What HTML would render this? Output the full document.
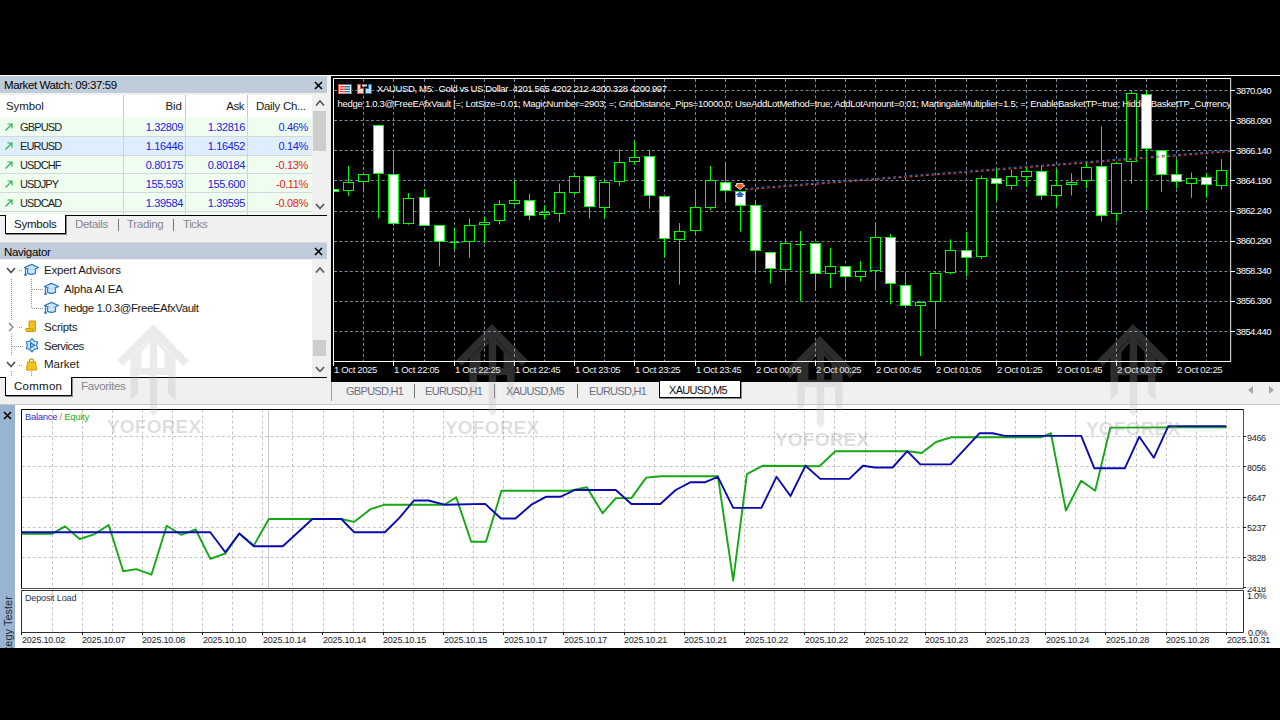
<!DOCTYPE html><html><head><meta charset="utf-8"><style>html,body{margin:0;padding:0;}body{width:1280px;height:720px;position:relative;overflow:hidden;background:#000;font-family:"Liberation Sans", sans-serif;}</style></head><body><div style="position:absolute;left:0px;top:75px;width:1280px;height:1px;background:#ffffff"></div>
<div style="position:absolute;left:0px;top:76px;width:331px;height:329px;background:#f0f0f0"></div>
<div style="position:absolute;left:0px;top:76px;width:327px;height:17px;background:#bfcddb"></div>
<div style="position:absolute;left:4px;top:77.00px;line-height:16px;font-size:11.5px;color:#000;letter-spacing:-0.4px;white-space:pre;">Market Watch: 09:37:59</div>
<svg style="position:absolute;left:313.5px;top:81.0px" width="9" height="9"><path d="M1 1L8 8M8 1L1 8" stroke="#000" stroke-width="1.6"/></svg>
<div style="position:absolute;left:0px;top:95px;width:312px;height:117px;background:#ffffff"></div>
<div style="position:absolute;left:6px;top:98.00px;line-height:16px;font-size:11.5px;color:#1a1a1a;letter-spacing:-0.1px;white-space:pre;">Symbol</div>
<div style="position:absolute;left:-118px;top:98.00px;width:300px;text-align:right;line-height:16px;font-size:11.5px;color:#1a1a1a;letter-spacing:0px;white-space:pre;">Bid</div>
<div style="position:absolute;left:-56px;top:98.00px;width:300px;text-align:right;line-height:16px;font-size:11.5px;color:#1a1a1a;letter-spacing:-0.45px;white-space:pre;">Ask</div>
<div style="position:absolute;left:256px;top:98.00px;line-height:16px;font-size:11.5px;color:#1a1a1a;letter-spacing:-0.3px;white-space:pre;">Daily Ch...</div>
<div style="position:absolute;left:123px;top:95px;width:1px;height:22px;background:#c8c8c8"></div>
<div style="position:absolute;left:185px;top:95px;width:1px;height:22px;background:#c8c8c8"></div>
<div style="position:absolute;left:247px;top:95px;width:1px;height:22px;background:#c8c8c8"></div>
<div style="position:absolute;left:0px;top:117px;width:312px;height:98px;background:#effdf0"></div>
<div style="position:absolute;left:0px;top:136px;width:312px;height:1px;background:#d4d8dc"></div>
<div style="position:absolute;left:0px;top:155px;width:312px;height:1px;background:#d4d8dc"></div>
<div style="position:absolute;left:0px;top:173px;width:312px;height:1px;background:#d4d8dc"></div>
<div style="position:absolute;left:0px;top:192px;width:312px;height:1px;background:#d4d8dc"></div>
<div style="position:absolute;left:0px;top:211px;width:312px;height:1px;background:#d4d8dc"></div>
<div style="position:absolute;left:123px;top:117px;width:1px;height:98px;background:#d4d4d4"></div>
<div style="position:absolute;left:185px;top:117px;width:1px;height:98px;background:#d4d4d4"></div>
<div style="position:absolute;left:247px;top:117px;width:1px;height:98px;background:#d4d4d4"></div>
<svg style="position:absolute;left:4px;top:121.7px" width="10" height="10"><path d="M1.5 8.5L8 2M3.5 2H8V6.5" stroke="#2fb04a" stroke-width="1.2" fill="none"/></svg>
<div style="position:absolute;left:20px;top:118.70px;line-height:16px;font-size:11px;color:#1a1a1a;letter-spacing:-0.85px;white-space:pre;">GBPUSD</div>
<div style="position:absolute;left:-117px;top:118.70px;width:300px;text-align:right;line-height:16px;font-size:11px;color:#2020e0;letter-spacing:-0.35px;white-space:pre;">1.32809</div>
<div style="position:absolute;left:-55px;top:118.70px;width:300px;text-align:right;line-height:16px;font-size:11px;color:#2020e0;letter-spacing:-0.35px;white-space:pre;">1.32816</div>
<div style="position:absolute;left:8px;top:118.70px;width:300px;text-align:right;line-height:16px;font-size:11px;color:#2222dd;letter-spacing:-0.35px;white-space:pre;">0.46%</div>
<div style="position:absolute;left:0px;top:137px;width:312px;height:18px;background:#dfeefc"></div>
<div style="position:absolute;left:123px;top:137px;width:1px;height:18px;background:#d4d4d4"></div>
<div style="position:absolute;left:185px;top:137px;width:1px;height:18px;background:#d4d4d4"></div>
<div style="position:absolute;left:247px;top:137px;width:1px;height:18px;background:#d4d4d4"></div>
<svg style="position:absolute;left:4px;top:140.7px" width="10" height="10"><path d="M1.5 8.5L8 2M3.5 2H8V6.5" stroke="#2fb04a" stroke-width="1.2" fill="none"/></svg>
<div style="position:absolute;left:20px;top:137.65px;line-height:16px;font-size:11px;color:#1a1a1a;letter-spacing:-0.85px;white-space:pre;">EURUSD</div>
<div style="position:absolute;left:-117px;top:137.65px;width:300px;text-align:right;line-height:16px;font-size:11px;color:#2020e0;letter-spacing:-0.35px;white-space:pre;">1.16446</div>
<div style="position:absolute;left:-55px;top:137.65px;width:300px;text-align:right;line-height:16px;font-size:11px;color:#2020e0;letter-spacing:-0.35px;white-space:pre;">1.16452</div>
<div style="position:absolute;left:8px;top:137.65px;width:300px;text-align:right;line-height:16px;font-size:11px;color:#2222dd;letter-spacing:-0.35px;white-space:pre;">0.14%</div>
<svg style="position:absolute;left:4px;top:159.6px" width="10" height="10"><path d="M1.5 8.5L8 2M3.5 2H8V6.5" stroke="#2fb04a" stroke-width="1.2" fill="none"/></svg>
<div style="position:absolute;left:20px;top:156.60px;line-height:16px;font-size:11px;color:#1a1a1a;letter-spacing:-0.85px;white-space:pre;">USDCHF</div>
<div style="position:absolute;left:-117px;top:156.60px;width:300px;text-align:right;line-height:16px;font-size:11px;color:#2020e0;letter-spacing:-0.35px;white-space:pre;">0.80175</div>
<div style="position:absolute;left:-55px;top:156.60px;width:300px;text-align:right;line-height:16px;font-size:11px;color:#2020e0;letter-spacing:-0.35px;white-space:pre;">0.80184</div>
<div style="position:absolute;left:8px;top:156.60px;width:300px;text-align:right;line-height:16px;font-size:11px;color:#e81818;letter-spacing:-0.35px;white-space:pre;">-0.13%</div>
<svg style="position:absolute;left:4px;top:178.6px" width="10" height="10"><path d="M1.5 8.5L8 2M3.5 2H8V6.5" stroke="#2fb04a" stroke-width="1.2" fill="none"/></svg>
<div style="position:absolute;left:20px;top:175.55px;line-height:16px;font-size:11px;color:#1a1a1a;letter-spacing:-0.85px;white-space:pre;">USDJPY</div>
<div style="position:absolute;left:-117px;top:175.55px;width:300px;text-align:right;line-height:16px;font-size:11px;color:#2020e0;letter-spacing:-0.35px;white-space:pre;">155.593</div>
<div style="position:absolute;left:-55px;top:175.55px;width:300px;text-align:right;line-height:16px;font-size:11px;color:#2020e0;letter-spacing:-0.35px;white-space:pre;">155.600</div>
<div style="position:absolute;left:8px;top:175.55px;width:300px;text-align:right;line-height:16px;font-size:11px;color:#e81818;letter-spacing:-0.35px;white-space:pre;">-0.11%</div>
<svg style="position:absolute;left:4px;top:197.5px" width="10" height="10"><path d="M1.5 8.5L8 2M3.5 2H8V6.5" stroke="#2fb04a" stroke-width="1.2" fill="none"/></svg>
<div style="position:absolute;left:20px;top:194.50px;line-height:16px;font-size:11px;color:#1a1a1a;letter-spacing:-0.85px;white-space:pre;">USDCAD</div>
<div style="position:absolute;left:-117px;top:194.50px;width:300px;text-align:right;line-height:16px;font-size:11px;color:#2020e0;letter-spacing:-0.35px;white-space:pre;">1.39584</div>
<div style="position:absolute;left:-55px;top:194.50px;width:300px;text-align:right;line-height:16px;font-size:11px;color:#2020e0;letter-spacing:-0.35px;white-space:pre;">1.39595</div>
<div style="position:absolute;left:8px;top:194.50px;width:300px;text-align:right;line-height:16px;font-size:11px;color:#e81818;letter-spacing:-0.35px;white-space:pre;">-0.08%</div>
<div style="position:absolute;left:312px;top:95px;width:15px;height:117px;background:#f0f0f0"></div>
<div style="position:absolute;left:313px;top:111px;width:13px;height:40px;background:#cdcdcd"></div>
<svg style="position:absolute;left:314.5px;top:100.25px" width="10" height="6.5"><path d="M1 5.5L5.0 1L9 5.5" stroke="#5a5a5a" stroke-width="1.8" fill="none"/></svg>
<svg style="position:absolute;left:314.5px;top:203.25px" width="10" height="6.5"><path d="M1 1L5.0 5.5L9 1" stroke="#5a5a5a" stroke-width="1.8" fill="none"/></svg>
<div style="position:absolute;left:0px;top:215px;width:327px;height:1px;background:#000"></div>
<div style="position:absolute;left:5px;top:215px;width:61px;height:19px;background:#fff;border:1px solid #000;border-top:none;box-sizing:border-box;box-shadow:1px 1px 0 #888"></div>
<div style="position:absolute;left:14px;top:216.00px;line-height:16px;font-size:11.5px;color:#111;letter-spacing:-0.22px;white-space:pre;">Symbols</div>
<div style="position:absolute;left:75px;top:216.00px;line-height:16px;font-size:11.5px;color:#85858f;letter-spacing:-0.3px;white-space:pre;">Details</div>
<div style="position:absolute;left:118px;top:219px;width:1px;height:12px;background:#777"></div>
<div style="position:absolute;left:127px;top:216.00px;line-height:16px;font-size:11.5px;color:#85858f;letter-spacing:-0.3px;white-space:pre;">Trading</div>
<div style="position:absolute;left:173px;top:219px;width:1px;height:12px;background:#777"></div>
<div style="position:absolute;left:183px;top:216.00px;line-height:16px;font-size:11.5px;color:#85858f;letter-spacing:-0.42px;white-space:pre;">Ticks</div>
<div style="position:absolute;left:0px;top:242px;width:327px;height:1px;background:#d8d8d8"></div>
<div style="position:absolute;left:0px;top:243px;width:327px;height:16px;background:#bfcddb"></div>
<div style="position:absolute;left:4px;top:243.50px;line-height:16px;font-size:11.5px;color:#000;letter-spacing:-0.29px;white-space:pre;">Navigator</div>
<svg style="position:absolute;left:313.5px;top:247.0px" width="9" height="9"><path d="M1 1L8 8M8 1L1 8" stroke="#000" stroke-width="1.6"/></svg>
<div style="position:absolute;left:0px;top:260px;width:312px;height:117px;background:#fff"></div>
<div style="position:absolute;left:312px;top:260px;width:15px;height:117px;background:#f0f0f0"></div>
<div style="position:absolute;left:313px;top:340px;width:13px;height:16px;background:#cdcdcd"></div>
<svg style="position:absolute;left:314.5px;top:266.75px" width="10" height="6.5"><path d="M1 5.5L5.0 1L9 5.5" stroke="#606060" stroke-width="1.8" fill="none"/></svg>
<svg style="position:absolute;left:314.5px;top:365.75px" width="10" height="6.5"><path d="M1 1L5.0 5.5L9 1" stroke="#606060" stroke-width="1.8" fill="none"/></svg>
<svg style="position:absolute;left:5.5px;top:267.25px" width="10" height="6.5"><path d="M1 1L5.0 5.5L9 1" stroke="#555" stroke-width="1.8" fill="none"/></svg>
<svg style="position:absolute;left:8px;top:322px" width="7" height="10"><path d="M1 1L5 5L1 9" stroke="#888" stroke-width="1.4" fill="none"/></svg>
<svg style="position:absolute;left:5.5px;top:361.25px" width="10" height="6.5"><path d="M1 1L5.0 5.5L9 1" stroke="#555" stroke-width="1.8" fill="none"/></svg>
<div style="position:absolute;left:19px;top:270px;width:3px;height:1px;background:repeating-linear-gradient(90deg,#999 0 1px, transparent 1px 2px)"></div>
<div style="position:absolute;left:19px;top:327px;width:3px;height:1px;background:repeating-linear-gradient(90deg,#999 0 1px, transparent 1px 2px)"></div>
<div style="position:absolute;left:19px;top:365px;width:3px;height:1px;background:repeating-linear-gradient(90deg,#999 0 1px, transparent 1px 2px)"></div>
<div style="position:absolute;left:11px;top:279px;width:1px;height:41px;background:repeating-linear-gradient(#999 0 1px, transparent 1px 2px)"></div>
<div style="position:absolute;left:11px;top:334px;width:1px;height:22px;background:repeating-linear-gradient(#999 0 1px, transparent 1px 2px)"></div>
<div style="position:absolute;left:11px;top:371px;width:1px;height:6px;background:repeating-linear-gradient(#999 0 1px, transparent 1px 2px)"></div>
<div style="position:absolute;left:12px;top:346px;width:12px;height:1px;background:repeating-linear-gradient(90deg,#999 0 1px, transparent 1px 2px)"></div>
<div style="position:absolute;left:31px;top:279px;width:1px;height:29px;background:repeating-linear-gradient(#999 0 1px, transparent 1px 2px)"></div>
<div style="position:absolute;left:32px;top:289px;width:11px;height:1px;background:repeating-linear-gradient(90deg,#999 0 1px, transparent 1px 2px)"></div>
<div style="position:absolute;left:32px;top:308px;width:11px;height:1px;background:repeating-linear-gradient(90deg,#999 0 1px, transparent 1px 2px)"></div>
<div style="position:absolute;left:31px;top:371px;width:1px;height:6px;background:repeating-linear-gradient(#999 0 1px, transparent 1px 2px)"></div>
<svg style="position:absolute;left:24px;top:263px" width="15" height="14"><path d="M0.5 4.5L7.5 1.5L14.5 4.5L7.5 7.5Z" fill="#cfe3f6" stroke="#2a78c4" stroke-width="1.2"/><path d="M3.5 6.2V10.2Q7.5 12.5 11.5 10.2V6.2" fill="#cfe3f6" stroke="#2a78c4" stroke-width="1.2"/><path d="M1.5 5V11" stroke="#2a78c4" stroke-width="1.2"/><circle cx="1.5" cy="11.8" r="1.3" fill="#2a78c4"/></svg>
<div style="position:absolute;left:44px;top:262.20px;line-height:16px;font-size:11.5px;color:#1a1a1a;letter-spacing:-0.21px;white-space:pre;">Expert Advisors</div>
<svg style="position:absolute;left:44px;top:282px" width="15" height="14"><path d="M0.5 4.5L7.5 1.5L14.5 4.5L7.5 7.5Z" fill="#cfe3f6" stroke="#2a78c4" stroke-width="1.2"/><path d="M3.5 6.2V10.2Q7.5 12.5 11.5 10.2V6.2" fill="#cfe3f6" stroke="#2a78c4" stroke-width="1.2"/><path d="M1.5 5V11" stroke="#2a78c4" stroke-width="1.2"/><circle cx="1.5" cy="11.8" r="1.3" fill="#2a78c4"/></svg>
<div style="position:absolute;left:64px;top:281.20px;line-height:16px;font-size:11.5px;color:#1a1a1a;letter-spacing:-0.24px;white-space:pre;">Alpha AI EA</div>
<svg style="position:absolute;left:44px;top:301px" width="15" height="14"><path d="M0.5 4.5L7.5 1.5L14.5 4.5L7.5 7.5Z" fill="#cfe3f6" stroke="#2a78c4" stroke-width="1.2"/><path d="M3.5 6.2V10.2Q7.5 12.5 11.5 10.2V6.2" fill="#cfe3f6" stroke="#2a78c4" stroke-width="1.2"/><path d="M1.5 5V11" stroke="#2a78c4" stroke-width="1.2"/><circle cx="1.5" cy="11.8" r="1.3" fill="#2a78c4"/></svg>
<div style="position:absolute;left:64px;top:300.20px;line-height:16px;font-size:11.5px;color:#1a1a1a;letter-spacing:-0.45px;white-space:pre;">hedge 1.0.3@FreeEAfxVault</div>
<svg style="position:absolute;left:25px;top:320px" width="12" height="13"><path d="M4 1H10.5V10.5Q10.5 11.5 9.5 11.5H1.5Q0.8 11.5 0.8 10.5V9.2Q0.8 8.5 1.5 8.5H4Z" fill="#f3c21a" stroke="#c8960a" stroke-width="1"/><path d="M1.5 8.5H8V11.5" fill="none" stroke="#c8960a" stroke-width="0.8"/></svg>
<div style="position:absolute;left:44px;top:318.80px;line-height:16px;font-size:11.5px;color:#1a1a1a;letter-spacing:-0.27px;white-space:pre;">Scripts</div>
<svg style="position:absolute;left:24.5px;top:338px" width="14" height="15"><path d="M7.00 0.70L4.70 3.32L1.28 4.00L2.40 7.30L1.28 10.60L4.70 11.28L7.00 13.90L9.30 11.28L12.72 10.60L11.60 7.30L12.72 4.00L9.30 3.32Z" fill="#cfe6fa" stroke="#2a78c4" stroke-width="1.1" stroke-linejoin="round"/><path d="M5.6 4.9V9.7L9.6 7.3Z" fill="none" stroke="#1f6fbf" stroke-width="1.2"/></svg>
<div style="position:absolute;left:44px;top:338.00px;line-height:16px;font-size:11.5px;color:#1a1a1a;letter-spacing:-0.54px;white-space:pre;">Services</div>
<svg style="position:absolute;left:26px;top:357px" width="12" height="14"><path d="M1.5 5H9.5L10.5 13H0.5Z" fill="#f5c518" stroke="#d09a00" stroke-width="1"/><path d="M3.5 5V3.2Q5.5 0.5 7.5 3.2V5" stroke="#c08a10" stroke-width="1.1" fill="none"/></svg>
<div style="position:absolute;left:44px;top:356.30px;line-height:16px;font-size:11.5px;color:#1a1a1a;letter-spacing:0px;white-space:pre;">Market</div>
<div style="position:absolute;left:0px;top:377px;width:327px;height:1px;background:#000"></div>
<div style="position:absolute;left:5px;top:377px;width:67px;height:19px;background:#fff;border:1px solid #000;border-top:none;box-sizing:border-box;box-shadow:1px 1px 0 #888"></div>
<div style="position:absolute;left:14px;top:378.00px;line-height:16px;font-size:11.5px;color:#111;letter-spacing:0.26px;white-space:pre;">Common</div>
<div style="position:absolute;left:81px;top:378.00px;line-height:16px;font-size:11.5px;color:#85858f;letter-spacing:-0.31px;white-space:pre;">Favorites</div>
<div style="position:absolute;left:330px;top:76px;width:950px;height:306px;background:#000"></div>
<div style="position:absolute;left:330px;top:76px;width:1px;height:306px;background:#e8e8e8"></div>
<svg style="position:absolute;left:0;top:0" width="1280" height="720"><defs><clipPath id="plot"><rect x="334" y="79" width="896" height="282"/></clipPath></defs><path d="M334 90.5H1230 M334 120.5H1230 M334 150.5H1230 M334 180.5H1230 M334 211.5H1230 M334 241.5H1230 M334 271.5H1230 M334 301.5H1230 M334 331.5H1230" stroke="#778899" stroke-width="1" stroke-dasharray="3 2.3" fill="none"/><path d="M363.5 79V361 M393.5 79V361 M424.5 79V361 M454.5 79V361 M484.5 79V361 M514.5 79V361 M544.5 79V361 M574.5 79V361 M604.5 79V361 M634.5 79V361 M664.5 79V361 M695.5 79V361 M725.5 79V361 M755.5 79V361 M785.5 79V361 M815.5 79V361 M845.5 79V361 M875.5 79V361 M905.5 79V361 M935.5 79V361 M966.5 79V361 M996.5 79V361 M1026.5 79V361 M1056.5 79V361 M1086.5 79V361 M1116.5 79V361 M1146.5 79V361 M1176.5 79V361 M1206.5 79V361" stroke="#778899" stroke-width="1" stroke-dasharray="3 2.5" fill="none"/><g clip-path="url(#plot)"><path d="M333.5 188.6V191.7" stroke="#00ff00" stroke-width="1"/><rect x="328.5" y="189.5" width="10" height="2.0" fill="#ffffff" stroke="#00ff00" stroke-width="1"/><path d="M348.5 165.8V195.8" stroke="#00ff00" stroke-width="1"/><rect x="343.5" y="182.5" width="10" height="8.0" fill="#000000" stroke="#00ff00" stroke-width="1"/><path d="M363.5 173.6V192.4" stroke="#00ff00" stroke-width="1"/><rect x="358.5" y="174.5" width="10" height="7.0" fill="#000000" stroke="#00ff00" stroke-width="1"/><path d="M378.5 124.7V218.4" stroke="#00ff00" stroke-width="1"/><rect x="373.5" y="125.5" width="10" height="48.0" fill="#ffffff" stroke="#00ff00" stroke-width="1"/><path d="M393.5 153.6V226.0" stroke="#00ff00" stroke-width="1"/><rect x="388.5" y="174.5" width="10" height="49.0" fill="#ffffff" stroke="#00ff00" stroke-width="1"/><path d="M408.5 193.1V224.7" stroke="#00ff00" stroke-width="1"/><rect x="403.5" y="198.5" width="10" height="25.0" fill="#000000" stroke="#00ff00" stroke-width="1"/><path d="M424.5 189.0V226.0" stroke="#00ff00" stroke-width="1"/><rect x="419.5" y="197.5" width="10" height="28.0" fill="#ffffff" stroke="#00ff00" stroke-width="1"/><path d="M439.5 225.0V266.4" stroke="#00ff00" stroke-width="1"/><rect x="434.5" y="225.5" width="10" height="16.0" fill="#ffffff" stroke="#00ff00" stroke-width="1"/><path d="M454.5 227.6V249.8" stroke="#00ff00" stroke-width="1"/><path d="M449.5 242.5H459.5" stroke="#00ff00" stroke-width="1"/><path d="M469.5 218.5V257.6" stroke="#00ff00" stroke-width="1"/><rect x="464.5" y="225.5" width="10" height="16.0" fill="#000000" stroke="#00ff00" stroke-width="1"/><path d="M484.5 216.6V243.1" stroke="#00ff00" stroke-width="1"/><rect x="479.5" y="222.5" width="10" height="2.0" fill="#000000" stroke="#00ff00" stroke-width="1"/><path d="M499.5 200.2V224.4" stroke="#00ff00" stroke-width="1"/><rect x="494.5" y="204.5" width="10" height="16.0" fill="#000000" stroke="#00ff00" stroke-width="1"/><path d="M514.5 180.7V205.1" stroke="#00ff00" stroke-width="1"/><rect x="509.5" y="200.5" width="10" height="3.0" fill="#000000" stroke="#00ff00" stroke-width="1"/><path d="M529.5 193.6V220.0" stroke="#00ff00" stroke-width="1"/><rect x="524.5" y="200.5" width="10" height="15.0" fill="#ffffff" stroke="#00ff00" stroke-width="1"/><path d="M544.5 205.1V219.5" stroke="#00ff00" stroke-width="1"/><rect x="539.5" y="212.5" width="10" height="2.0" fill="#000000" stroke="#00ff00" stroke-width="1"/><path d="M559.5 183.6V222.0" stroke="#00ff00" stroke-width="1"/><rect x="554.5" y="192.5" width="10" height="21.0" fill="#000000" stroke="#00ff00" stroke-width="1"/><path d="M574.5 175.1V194.7" stroke="#00ff00" stroke-width="1"/><rect x="569.5" y="176.5" width="10" height="16.0" fill="#000000" stroke="#00ff00" stroke-width="1"/><path d="M589.5 176.4V218.5" stroke="#00ff00" stroke-width="1"/><rect x="584.5" y="176.5" width="10" height="30.0" fill="#ffffff" stroke="#00ff00" stroke-width="1"/><path d="M604.5 180.7V218.2" stroke="#00ff00" stroke-width="1"/><rect x="599.5" y="182.5" width="10" height="25.0" fill="#000000" stroke="#00ff00" stroke-width="1"/><path d="M619.5 149.1V185.8" stroke="#00ff00" stroke-width="1"/><rect x="614.5" y="162.5" width="10" height="19.0" fill="#000000" stroke="#00ff00" stroke-width="1"/><path d="M634.5 141.3V164.7" stroke="#00ff00" stroke-width="1"/><rect x="629.5" y="157.5" width="10" height="4.0" fill="#000000" stroke="#00ff00" stroke-width="1"/><path d="M649.5 149.6V208.7" stroke="#00ff00" stroke-width="1"/><rect x="644.5" y="156.5" width="10" height="39.0" fill="#ffffff" stroke="#00ff00" stroke-width="1"/><path d="M664.5 196.4V257.1" stroke="#00ff00" stroke-width="1"/><rect x="659.5" y="196.5" width="10" height="42.0" fill="#ffffff" stroke="#00ff00" stroke-width="1"/><path d="M679.5 223.1V284.7" stroke="#00ff00" stroke-width="1"/><rect x="674.5" y="231.5" width="10" height="8.0" fill="#000000" stroke="#00ff00" stroke-width="1"/><path d="M695.5 189.1V234.9" stroke="#00ff00" stroke-width="1"/><rect x="690.5" y="207.5" width="10" height="23.0" fill="#000000" stroke="#00ff00" stroke-width="1"/><path d="M710.5 165.8V210.0" stroke="#00ff00" stroke-width="1"/><rect x="705.5" y="180.5" width="10" height="27.0" fill="#000000" stroke="#00ff00" stroke-width="1"/><path d="M725.5 163.1V201.3" stroke="#00ff00" stroke-width="1"/><rect x="720.5" y="182.5" width="10" height="8.0" fill="#ffffff" stroke="#00ff00" stroke-width="1"/><path d="M740.5 190.9V231.5" stroke="#00ff00" stroke-width="1"/><rect x="735.5" y="191.5" width="10" height="14.0" fill="#ffffff" stroke="#00ff00" stroke-width="1"/><path d="M755.5 199.8V272.7" stroke="#00ff00" stroke-width="1"/><rect x="750.5" y="205.5" width="10" height="45.0" fill="#ffffff" stroke="#00ff00" stroke-width="1"/><path d="M770.5 252.0V283.5" stroke="#00ff00" stroke-width="1"/><rect x="765.5" y="252.5" width="10" height="16.0" fill="#ffffff" stroke="#00ff00" stroke-width="1"/><path d="M785.5 238.4V282.2" stroke="#00ff00" stroke-width="1"/><rect x="780.5" y="243.5" width="10" height="26.0" fill="#000000" stroke="#00ff00" stroke-width="1"/><path d="M800.5 231.1V301.1" stroke="#00ff00" stroke-width="1"/><path d="M795.5 244.5H805.5" stroke="#00ff00" stroke-width="1"/><path d="M815.5 243.3V290.0" stroke="#00ff00" stroke-width="1"/><rect x="810.5" y="243.5" width="10" height="30.0" fill="#ffffff" stroke="#00ff00" stroke-width="1"/><path d="M830.5 247.8V288.2" stroke="#00ff00" stroke-width="1"/><rect x="825.5" y="266.5" width="10" height="7.0" fill="#000000" stroke="#00ff00" stroke-width="1"/><path d="M845.5 266.0V291.1" stroke="#00ff00" stroke-width="1"/><rect x="840.5" y="266.5" width="10" height="10.0" fill="#ffffff" stroke="#00ff00" stroke-width="1"/><path d="M860.5 261.1V281.6" stroke="#00ff00" stroke-width="1"/><rect x="855.5" y="271.5" width="10" height="5.0" fill="#000000" stroke="#00ff00" stroke-width="1"/><path d="M875.5 224.4V289.6" stroke="#00ff00" stroke-width="1"/><rect x="870.5" y="237.5" width="10" height="33.0" fill="#000000" stroke="#00ff00" stroke-width="1"/><path d="M890.5 234.0V304.4" stroke="#00ff00" stroke-width="1"/><rect x="885.5" y="237.5" width="10" height="46.0" fill="#ffffff" stroke="#00ff00" stroke-width="1"/><path d="M905.5 273.1V307.8" stroke="#00ff00" stroke-width="1"/><rect x="900.5" y="285.5" width="10" height="20.0" fill="#ffffff" stroke="#00ff00" stroke-width="1"/><path d="M920.5 301.1V356.1" stroke="#00ff00" stroke-width="1"/><rect x="915.5" y="302.5" width="10" height="3.0" fill="#000000" stroke="#00ff00" stroke-width="1"/><path d="M935.5 271.1V328.3" stroke="#00ff00" stroke-width="1"/><rect x="930.5" y="273.5" width="10" height="28.0" fill="#000000" stroke="#00ff00" stroke-width="1"/><path d="M950.5 239.3V274.4" stroke="#00ff00" stroke-width="1"/><rect x="945.5" y="250.5" width="10" height="22.0" fill="#000000" stroke="#00ff00" stroke-width="1"/><path d="M966.5 231.8V276.2" stroke="#00ff00" stroke-width="1"/><rect x="961.5" y="250.5" width="10" height="7.0" fill="#ffffff" stroke="#00ff00" stroke-width="1"/><path d="M981.5 175.6V258.9" stroke="#00ff00" stroke-width="1"/><rect x="976.5" y="178.5" width="10" height="78.0" fill="#000000" stroke="#00ff00" stroke-width="1"/><path d="M996.5 168.9V200.7" stroke="#00ff00" stroke-width="1"/><rect x="991.5" y="178.5" width="10" height="5.0" fill="#ffffff" stroke="#00ff00" stroke-width="1"/><path d="M1011.5 169.6V189.6" stroke="#00ff00" stroke-width="1"/><rect x="1006.5" y="176.5" width="10" height="9.0" fill="#000000" stroke="#00ff00" stroke-width="1"/><path d="M1026.5 166.7V187.3" stroke="#00ff00" stroke-width="1"/><rect x="1021.5" y="171.5" width="10" height="5.0" fill="#000000" stroke="#00ff00" stroke-width="1"/><path d="M1041.5 165.5V199.7" stroke="#00ff00" stroke-width="1"/><rect x="1036.5" y="171.5" width="10" height="24.0" fill="#ffffff" stroke="#00ff00" stroke-width="1"/><path d="M1056.5 169.0V207.0" stroke="#00ff00" stroke-width="1"/><rect x="1051.5" y="185.5" width="10" height="10.0" fill="#000000" stroke="#00ff00" stroke-width="1"/><path d="M1071.5 173.3V195.5" stroke="#00ff00" stroke-width="1"/><rect x="1066.5" y="182.5" width="10" height="2.0" fill="#000000" stroke="#00ff00" stroke-width="1"/><path d="M1086.5 163.0V188.0" stroke="#00ff00" stroke-width="1"/><rect x="1081.5" y="167.5" width="10" height="13.0" fill="#000000" stroke="#00ff00" stroke-width="1"/><path d="M1101.5 126.3V221.3" stroke="#00ff00" stroke-width="1"/><rect x="1096.5" y="166.5" width="10" height="49.0" fill="#ffffff" stroke="#00ff00" stroke-width="1"/><path d="M1116.5 162.2V221.3" stroke="#00ff00" stroke-width="1"/><rect x="1111.5" y="163.5" width="10" height="50.0" fill="#000000" stroke="#00ff00" stroke-width="1"/><path d="M1131.5 90.0V183.5" stroke="#00ff00" stroke-width="1"/><rect x="1126.5" y="93.5" width="10" height="68.0" fill="#000000" stroke="#00ff00" stroke-width="1"/><path d="M1146.5 90.0V210.0" stroke="#00ff00" stroke-width="1"/><rect x="1141.5" y="94.5" width="10" height="54.0" fill="#ffffff" stroke="#00ff00" stroke-width="1"/><path d="M1161.5 150.3V192.0" stroke="#00ff00" stroke-width="1"/><rect x="1156.5" y="150.5" width="10" height="24.0" fill="#ffffff" stroke="#00ff00" stroke-width="1"/><path d="M1176.5 159.2V188.3" stroke="#00ff00" stroke-width="1"/><rect x="1171.5" y="174.5" width="10" height="7.0" fill="#ffffff" stroke="#00ff00" stroke-width="1"/><path d="M1191.5 172.5V197.8" stroke="#00ff00" stroke-width="1"/><rect x="1186.5" y="178.5" width="10" height="5.0" fill="#000000" stroke="#00ff00" stroke-width="1"/><path d="M1206.5 173.0V197.5" stroke="#00ff00" stroke-width="1"/><rect x="1201.5" y="177.5" width="10" height="7.0" fill="#ffffff" stroke="#00ff00" stroke-width="1"/><path d="M1221.5 159.2V189.7" stroke="#00ff00" stroke-width="1"/><rect x="1216.5" y="170.5" width="10" height="15.0" fill="#000000" stroke="#00ff00" stroke-width="1"/><path d="M745 188.6L1230 150.4" stroke="#1e6ad0" stroke-width="1" stroke-dasharray="3 2.5" fill="none"/><path d="M745 189.8L1230 151.6" stroke="#e0502a" stroke-width="1" stroke-dasharray="3 2.5" fill="none"/><path d="M736.5 183.5H743V185.5H745L740 189.5L735 185.5H736.5Z" fill="#ee5522" stroke="#fff" stroke-width="0.8"/><path d="M740 191.5L744.5 195H742.5V197H737.5V195H735.5Z" fill="#1a66cc"/></g><path d="M1230.5 361.5H333.5V78.5H1230" stroke="#ffffff" stroke-width="1" fill="none"/><path d="M1230.6 78V362" stroke="#c8c8c8" stroke-width="1.2" fill="none"/><path d="M1231 90.5H1235 M1231 120.5H1235 M1231 150.5H1235 M1231 180.5H1235 M1231 211.5H1235 M1231 241.5H1235 M1231 271.5H1235 M1231 301.5H1235 M1231 331.5H1235 M333.5 362V366 M393.5 362V366 M454.5 362V366 M514.5 362V366 M574.5 362V366 M634.5 362V366 M695.5 362V366 M755.5 362V366 M815.5 362V366 M875.5 362V366 M935.5 362V366 M996.5 362V366 M1056.5 362V366 M1116.5 362V366 M1176.5 362V366" stroke="#ffffff" stroke-width="1"/></svg>
<svg style="position:absolute;left:338px;top:84px" width="14" height="10"><rect x="0" y="0" width="7" height="10" fill="#e0483c"/><rect x="7" y="0" width="7" height="10" fill="#1f6fbf"/><path d="M1.5 1.5H12.5M1.5 4H12.5M1.5 6.5H12.5M1.5 8.8H12.5" stroke="#fff" stroke-width="1"/><path d="M1.5 1V9.5M12.5 1V9.5" stroke="#fff" stroke-width="1"/></svg>
<svg style="position:absolute;left:357px;top:84px" width="15" height="10"><path d="M0 0H4V4H7V10H0Z" fill="#e0483c"/><path d="M1 1H3V5H6V9H1Z" fill="#f8d8d0"/><path d="M8 10V4H11V0H15V10Z" fill="#1f6fbf"/><path d="M9 9V5H12V1H14V9Z" fill="#b8dcf8"/><rect x="5" y="0.5" width="5" height="2" fill="#ddd"/></svg>
<div style="position:absolute;left:377px;top:81.00px;line-height:16px;font-size:9.5px;color:#ffffff;letter-spacing:-0.35px;white-space:pre;">XAUUSD, M5:  Gold vs US Dollar  4201.565 4202.212 4200.328 4200.997</div>
<div style="position:absolute;left:334px;top:79px;width:896px;height:40px;overflow:hidden">
<div style="position:absolute;left:3.5px;top:16.50px;line-height:16px;font-size:9.5px;color:#ffffff;letter-spacing:-0.28px;white-space:pre;">hedge 1.0.3@FreeEAfxVault [=; LotSize=0.01; MagicNumber=2903; =; GridDistance_Pips=10000.0; UseAddLotMethod=true; AddLotAmount=0.01; MartingaleMultiplier=1.5; =; EnableBasketTP=true; HiddenBasketTP_Currency=5.0</div>
</div>
<div style="position:absolute;left:1236px;top:82.50px;line-height:16px;font-size:9.5px;color:#ffffff;letter-spacing:-0.58px;white-space:pre;">3870.040</div>
<div style="position:absolute;left:1236px;top:112.62px;line-height:16px;font-size:9.5px;color:#ffffff;letter-spacing:-0.58px;white-space:pre;">3868.090</div>
<div style="position:absolute;left:1236px;top:142.75px;line-height:16px;font-size:9.5px;color:#ffffff;letter-spacing:-0.58px;white-space:pre;">3866.140</div>
<div style="position:absolute;left:1236px;top:172.88px;line-height:16px;font-size:9.5px;color:#ffffff;letter-spacing:-0.58px;white-space:pre;">3864.190</div>
<div style="position:absolute;left:1236px;top:203.00px;line-height:16px;font-size:9.5px;color:#ffffff;letter-spacing:-0.58px;white-space:pre;">3862.240</div>
<div style="position:absolute;left:1236px;top:233.12px;line-height:16px;font-size:9.5px;color:#ffffff;letter-spacing:-0.58px;white-space:pre;">3860.290</div>
<div style="position:absolute;left:1236px;top:263.25px;line-height:16px;font-size:9.5px;color:#ffffff;letter-spacing:-0.58px;white-space:pre;">3858.340</div>
<div style="position:absolute;left:1236px;top:293.38px;line-height:16px;font-size:9.5px;color:#ffffff;letter-spacing:-0.58px;white-space:pre;">3856.390</div>
<div style="position:absolute;left:1236px;top:323.50px;line-height:16px;font-size:9.5px;color:#ffffff;letter-spacing:-0.58px;white-space:pre;">3854.440</div>
<div style="position:absolute;left:334px;top:362.00px;line-height:16px;font-size:9.5px;color:#f0f0f0;letter-spacing:-0.35px;white-space:pre;">1 Oct 2025</div>
<div style="position:absolute;left:394px;top:362.00px;line-height:16px;font-size:9.5px;color:#f0f0f0;letter-spacing:-0.35px;white-space:pre;">1 Oct 22:05</div>
<div style="position:absolute;left:455px;top:362.00px;line-height:16px;font-size:9.5px;color:#f0f0f0;letter-spacing:-0.35px;white-space:pre;">1 Oct 22:25</div>
<div style="position:absolute;left:515px;top:362.00px;line-height:16px;font-size:9.5px;color:#f0f0f0;letter-spacing:-0.35px;white-space:pre;">1 Oct 22:45</div>
<div style="position:absolute;left:575px;top:362.00px;line-height:16px;font-size:9.5px;color:#f0f0f0;letter-spacing:-0.35px;white-space:pre;">1 Oct 23:05</div>
<div style="position:absolute;left:635px;top:362.00px;line-height:16px;font-size:9.5px;color:#f0f0f0;letter-spacing:-0.35px;white-space:pre;">1 Oct 23:25</div>
<div style="position:absolute;left:696px;top:362.00px;line-height:16px;font-size:9.5px;color:#f0f0f0;letter-spacing:-0.35px;white-space:pre;">1 Oct 23:45</div>
<div style="position:absolute;left:756px;top:362.00px;line-height:16px;font-size:9.5px;color:#f0f0f0;letter-spacing:-0.35px;white-space:pre;">2 Oct 00:05</div>
<div style="position:absolute;left:816px;top:362.00px;line-height:16px;font-size:9.5px;color:#f0f0f0;letter-spacing:-0.35px;white-space:pre;">2 Oct 00:25</div>
<div style="position:absolute;left:876px;top:362.00px;line-height:16px;font-size:9.5px;color:#f0f0f0;letter-spacing:-0.35px;white-space:pre;">2 Oct 00:45</div>
<div style="position:absolute;left:936px;top:362.00px;line-height:16px;font-size:9.5px;color:#f0f0f0;letter-spacing:-0.35px;white-space:pre;">2 Oct 01:05</div>
<div style="position:absolute;left:997px;top:362.00px;line-height:16px;font-size:9.5px;color:#f0f0f0;letter-spacing:-0.35px;white-space:pre;">2 Oct 01:25</div>
<div style="position:absolute;left:1057px;top:362.00px;line-height:16px;font-size:9.5px;color:#f0f0f0;letter-spacing:-0.35px;white-space:pre;">2 Oct 01:45</div>
<div style="position:absolute;left:1117px;top:362.00px;line-height:16px;font-size:9.5px;color:#f0f0f0;letter-spacing:-0.35px;white-space:pre;">2 Oct 02:05</div>
<div style="position:absolute;left:1177px;top:362.00px;line-height:16px;font-size:9.5px;color:#f0f0f0;letter-spacing:-0.35px;white-space:pre;">2 Oct 02:25</div>
<div style="position:absolute;left:331px;top:382px;width:949px;height:22px;background:#f0f0f0"></div>
<div style="position:absolute;left:331px;top:382px;width:1px;height:19px;background:#a0a0a0"></div>
<div style="position:absolute;left:346px;top:382.50px;line-height:16px;font-size:11px;color:#6e6e80;letter-spacing:-0.7px;white-space:pre;">GBPUSD,H1</div>
<div style="position:absolute;left:425px;top:382.50px;line-height:16px;font-size:11px;color:#6e6e80;letter-spacing:-0.7px;white-space:pre;">EURUSD,H1</div>
<div style="position:absolute;left:506px;top:382.50px;line-height:16px;font-size:11px;color:#6e6e80;letter-spacing:-0.7px;white-space:pre;">XAUUSD,M5</div>
<div style="position:absolute;left:589px;top:382.50px;line-height:16px;font-size:11px;color:#6e6e80;letter-spacing:-0.7px;white-space:pre;">EURUSD,H1</div>
<div style="position:absolute;left:414px;top:384px;width:1px;height:14px;background:#777"></div>
<div style="position:absolute;left:494px;top:384px;width:1px;height:14px;background:#777"></div>
<div style="position:absolute;left:577px;top:384px;width:1px;height:14px;background:#777"></div>
<div style="position:absolute;left:659px;top:381px;width:82px;height:17px;background:#fff;border:1px solid #000;border-top:none;box-sizing:border-box;box-shadow:1px 1px 0 #888"></div>
<div style="position:absolute;left:669px;top:381.50px;line-height:16px;font-size:11px;color:#111;letter-spacing:-0.7px;white-space:pre;">XAUUSD,M5</div>
<svg style="position:absolute;left:1247px;top:385px" width="8" height="10"><path d="M6 1V9L1 5Z" fill="#a8a8a8"/></svg>
<svg style="position:absolute;left:1267px;top:385px" width="8" height="10"><path d="M2 1V9L7 5Z" fill="#a8a8a8"/></svg>
<div style="position:absolute;left:0px;top:404px;width:1280px;height:1px;background:#c8c8c8"></div>
<div style="position:absolute;left:0px;top:405px;width:1280px;height:243px;background:#ffffff"></div>
<div style="position:absolute;left:0px;top:405px;width:15px;height:243px;background:#99b4d1"></div>
<svg style="position:absolute;left:3.0px;top:411.0px" width="9" height="9"><path d="M1 1L8 8M8 1L1 8" stroke="#000" stroke-width="1.6"/></svg>
<div style="position:absolute;left:0;top:405px;width:15px;height:243px;overflow:hidden"><div style="position:absolute;left:-32px;top:220.7px;width:80px;height:14px;line-height:14px;font-size:11px;color:#1c2a3a;white-space:pre;transform:rotate(-90deg);transform-origin:40px 7px;text-align:center">Strategy Tester</div></div>
<svg style="position:absolute;left:0;top:0" width="1280" height="720"><path d="M52.5 410V588M52.5 591V632 M82.5 410V588M82.5 591V632 M112.5 410V588M112.5 591V632 M142.5 410V588M142.5 591V632 M172.5 410V588M172.5 591V632 M202.5 410V588M202.5 591V632 M232.5 410V588M232.5 591V632 M262.5 410V588M262.5 591V632 M292.5 410V588M292.5 591V632 M323.5 410V588M323.5 591V632 M353.5 410V588M353.5 591V632 M383.5 410V588M383.5 591V632 M413.5 410V588M413.5 591V632 M443.5 410V588M443.5 591V632 M473.5 410V588M473.5 591V632 M503.5 410V588M503.5 591V632 M533.5 410V588M533.5 591V632 M563.5 410V588M563.5 591V632 M594.5 410V588M594.5 591V632 M624.5 410V588M624.5 591V632 M654.5 410V588M654.5 591V632 M684.5 410V588M684.5 591V632 M714.5 410V588M714.5 591V632 M744.5 410V588M744.5 591V632 M774.5 410V588M774.5 591V632 M804.5 410V588M804.5 591V632 M834.5 410V588M834.5 591V632 M865.5 410V588M865.5 591V632 M895.5 410V588M895.5 591V632 M925.5 410V588M925.5 591V632 M955.5 410V588M955.5 591V632 M985.5 410V588M985.5 591V632 M1015.5 410V588M1015.5 591V632 M1045.5 410V588M1045.5 591V632 M1075.5 410V588M1075.5 591V632 M1105.5 410V588M1105.5 591V632 M1136.5 410V588M1136.5 591V632 M1166.5 410V588M1166.5 591V632 M1196.5 410V588M1196.5 591V632 M1226.5 410V588M1226.5 591V632" stroke="#c4c4c4" stroke-width="1" stroke-dasharray="2.8 2.6" fill="none"/><path d="M22 436.5H1243 M22 466.5H1243 M22 497.5H1243 M22 527.5H1243 M22 557.5H1243" stroke="#c4c4c4" stroke-width="1" stroke-dasharray="2.8 2.6" fill="none"/><path d="M268.5 410V588" stroke="#c8c8c8" stroke-width="1"/><path d="M21.5 588.5V409.5H1243" stroke="#000" stroke-width="1" fill="none"/><path d="M1243.5 409V588.5H21" stroke="#505050" stroke-width="1" fill="none"/><path d="M21.5 590.5H1243.5V632.5H21.5Z" stroke="#303030" stroke-width="1" fill="none"/><path d="M1243 436.5H1246 M1243 466.5H1246 M1243 497.5H1246 M1243 527.5H1246 M1243 557.5H1246 M1243 587.5H1246 M21.5 632V635 M82.5 632V635 M142.5 632V635 M202.5 632V635 M262.5 632V635 M322.5 632V635 M383.5 632V635 M443.5 632V635 M503.5 632V635 M563.5 632V635 M624.5 632V635 M684.5 632V635 M744.5 632V635 M804.5 632V635 M864.5 632V635 M925.5 632V635 M985.5 632V635 M1045.5 632V635 M1105.5 632V635 M1166.5 632V635 M1226.5 632V635" stroke="#1a1a1a" stroke-width="1"/><polyline points="21.6,533.8 51.9,533.8 65.1,526.4 79.6,539 94.2,534.3 108.7,525 123.2,571.2 136.4,569.1 151.4,574.7 166.7,525.8 181.2,534.8 195.7,529.5 210.3,558.8 225.3,553.5 239.3,533.5 253.8,545.6 268.8,519 341.4,519 354,521.9 370.4,509.2 384.9,504.7 444.3,504.7 456.2,497.3 471.2,541.7 486,541.7 501.5,490.8 570,490.8 586.8,487.3 602.6,513.2 615.8,498.1 631.4,498.1 646.1,477.6 661.2,476.2 717.9,476.2 733.2,580.5 746.9,474.1 762.8,465.7 819.5,466.2 835.3,451.2 907.9,451.2 921.6,453 936.1,442 951.9,437.2 1041.6,437.2 1050.9,433.2 1065.9,510.5 1081.2,480.7 1095.2,490.8 1110.3,427.6 1168.3,427.4 1226.3,427.4" stroke="#14a814" stroke-width="1.9" fill="none" stroke-linejoin="round"/><polyline points="21.6,532.3 210.3,532.3 225.3,552.2 239.3,533.5 253.8,546.2 282.8,546.2 312.4,519 341.4,519 354,532.2 384.9,532.2 399.4,517.9 413.9,500.5 428.5,500.5 444.3,504.7 485.2,503.9 501,518.5 515.5,518.5 531.4,504.7 545.9,496.8 560.4,496.8 574.9,490 615.8,490 631.4,504 660.4,504 675.7,490 690.2,482.3 704.7,482.3 717.9,476.8 733.2,507.9 761.4,507.9 776.5,476.8 790.5,496 805.5,465.7 820.3,478.9 849.3,478.9 863,465.7 874.9,467.5 892.6,467.5 907.3,451.2 920.3,464.4 950.6,464.4 979.6,433.2 992.8,433.2 1004.7,435.9 1081.2,435.9 1094.4,468.3 1124.8,468.3 1139.3,436.7 1153.8,457.8 1168.3,426.1 1226.3,426.1" stroke="#0a0ab0" stroke-width="1.9" fill="none" stroke-linejoin="round"/></svg>
<div style="position:absolute;left:25px;top:409.00px;line-height:16px;font-size:9.5px;color:#000;letter-spacing:-0.3px;white-space:pre;"><span style="color:#3434c8">Balance</span> <span style="color:#c87030">/</span> <span style="color:#22b022">Equity</span></div>
<div style="position:absolute;left:25px;top:590.00px;line-height:16px;font-size:9px;color:#2a3450;letter-spacing:-0.15px;white-space:pre;">Deposit Load</div>
<div style="position:absolute;left:1247px;top:430.00px;line-height:16px;font-size:9px;color:#1a1a2a;letter-spacing:-0.3px;white-space:pre;">9466</div>
<div style="position:absolute;left:1247px;top:460.10px;line-height:16px;font-size:9px;color:#1a1a2a;letter-spacing:-0.3px;white-space:pre;">8056</div>
<div style="position:absolute;left:1247px;top:490.20px;line-height:16px;font-size:9px;color:#1a1a2a;letter-spacing:-0.3px;white-space:pre;">6647</div>
<div style="position:absolute;left:1247px;top:520.30px;line-height:16px;font-size:9px;color:#1a1a2a;letter-spacing:-0.3px;white-space:pre;">5237</div>
<div style="position:absolute;left:1247px;top:550.40px;line-height:16px;font-size:9px;color:#1a1a2a;letter-spacing:-0.3px;white-space:pre;">3828</div>
<div style="position:absolute;left:1240px;top:587px;width:40px;height:10px;overflow:hidden">
<div style="position:absolute;left:7px;top:-6.00px;line-height:16px;font-size:9px;color:#1a1a2a;letter-spacing:-0.3px;white-space:pre;">2418</div>
</div>
<div style="position:absolute;left:1247px;top:588.30px;line-height:16px;font-size:9px;color:#1a1a2a;letter-spacing:-0.3px;white-space:pre;">1.0%</div>
<div style="position:absolute;left:1248px;top:625.00px;line-height:16px;font-size:9px;color:#1a1a2a;letter-spacing:-0.3px;white-space:pre;">0.0%</div>
<div style="position:absolute;left:22px;top:632.00px;line-height:16px;font-size:9px;color:#1a1a2a;letter-spacing:-0.2px;white-space:pre;">2025.10.02</div>
<div style="position:absolute;left:82px;top:632.00px;line-height:16px;font-size:9px;color:#1a1a2a;letter-spacing:-0.2px;white-space:pre;">2025.10.07</div>
<div style="position:absolute;left:142px;top:632.00px;line-height:16px;font-size:9px;color:#1a1a2a;letter-spacing:-0.2px;white-space:pre;">2025.10.08</div>
<div style="position:absolute;left:203px;top:632.00px;line-height:16px;font-size:9px;color:#1a1a2a;letter-spacing:-0.2px;white-space:pre;">2025.10.10</div>
<div style="position:absolute;left:263px;top:632.00px;line-height:16px;font-size:9px;color:#1a1a2a;letter-spacing:-0.2px;white-space:pre;">2025.10.14</div>
<div style="position:absolute;left:323px;top:632.00px;line-height:16px;font-size:9px;color:#1a1a2a;letter-spacing:-0.2px;white-space:pre;">2025.10.14</div>
<div style="position:absolute;left:383px;top:632.00px;line-height:16px;font-size:9px;color:#1a1a2a;letter-spacing:-0.2px;white-space:pre;">2025.10.15</div>
<div style="position:absolute;left:444px;top:632.00px;line-height:16px;font-size:9px;color:#1a1a2a;letter-spacing:-0.2px;white-space:pre;">2025.10.15</div>
<div style="position:absolute;left:504px;top:632.00px;line-height:16px;font-size:9px;color:#1a1a2a;letter-spacing:-0.2px;white-space:pre;">2025.10.17</div>
<div style="position:absolute;left:564px;top:632.00px;line-height:16px;font-size:9px;color:#1a1a2a;letter-spacing:-0.2px;white-space:pre;">2025.10.17</div>
<div style="position:absolute;left:624px;top:632.00px;line-height:16px;font-size:9px;color:#1a1a2a;letter-spacing:-0.2px;white-space:pre;">2025.10.21</div>
<div style="position:absolute;left:684px;top:632.00px;line-height:16px;font-size:9px;color:#1a1a2a;letter-spacing:-0.2px;white-space:pre;">2025.10.21</div>
<div style="position:absolute;left:745px;top:632.00px;line-height:16px;font-size:9px;color:#1a1a2a;letter-spacing:-0.2px;white-space:pre;">2025.10.22</div>
<div style="position:absolute;left:805px;top:632.00px;line-height:16px;font-size:9px;color:#1a1a2a;letter-spacing:-0.2px;white-space:pre;">2025.10.22</div>
<div style="position:absolute;left:865px;top:632.00px;line-height:16px;font-size:9px;color:#1a1a2a;letter-spacing:-0.2px;white-space:pre;">2025.10.22</div>
<div style="position:absolute;left:925px;top:632.00px;line-height:16px;font-size:9px;color:#1a1a2a;letter-spacing:-0.2px;white-space:pre;">2025.10.23</div>
<div style="position:absolute;left:986px;top:632.00px;line-height:16px;font-size:9px;color:#1a1a2a;letter-spacing:-0.2px;white-space:pre;">2025.10.23</div>
<div style="position:absolute;left:1046px;top:632.00px;line-height:16px;font-size:9px;color:#1a1a2a;letter-spacing:-0.2px;white-space:pre;">2025.10.24</div>
<div style="position:absolute;left:1106px;top:632.00px;line-height:16px;font-size:9px;color:#1a1a2a;letter-spacing:-0.2px;white-space:pre;">2025.10.28</div>
<div style="position:absolute;left:1166px;top:632.00px;line-height:16px;font-size:9px;color:#1a1a2a;letter-spacing:-0.2px;white-space:pre;">2025.10.28</div>
<div style="position:absolute;left:1227px;top:632.00px;line-height:16px;font-size:9px;color:#1a1a2a;letter-spacing:-0.2px;white-space:pre;">2025.10.31</div>
<svg style="position:absolute;left:113px;top:321.6px" width="80" height="96"><g opacity="0.25" fill="rgb(180,180,180)"><path d="M4.2 38.2L40 2L75.8 38.2L70 44.1L40 13L10 44.1Z"/><path d="M17.5 36L25 29V72L17.5 78Z"/><path d="M25 29L36.7 17V21L28.5 30V46H25Z"/><path d="M36.7 12H44.2V90L40.5 94L36.7 90Z"/><path d="M55 29L43.3 17V21L51.5 30V46H55Z"/><path d="M62.5 36L55 29V72L62.5 78Z"/><path d="M17.5 45.7H62.5V53H17.5Z"/></g></svg>
<div style="position:absolute;left:107px;top:416px;line-height:22px;font-size:19px;font-weight:bold;color:rgba(140,140,140,0.28);white-space:pre;letter-spacing:0.2px">YOFOREX</div>
<svg style="position:absolute;left:452px;top:321.6px" width="80" height="96"><g opacity="0.25" fill="rgb(180,180,180)"><path d="M4.2 38.2L40 2L75.8 38.2L70 44.1L40 13L10 44.1Z"/><path d="M17.5 36L25 29V72L17.5 78Z"/><path d="M25 29L36.7 17V21L28.5 30V46H25Z"/><path d="M36.7 12H44.2V90L40.5 94L36.7 90Z"/><path d="M55 29L43.3 17V21L51.5 30V46H55Z"/><path d="M62.5 36L55 29V72L62.5 78Z"/><path d="M17.5 45.7H62.5V53H17.5Z"/></g></svg>
<div style="position:absolute;left:445px;top:417px;line-height:22px;font-size:19px;font-weight:bold;color:rgba(140,140,140,0.28);white-space:pre;letter-spacing:0.2px">YOFOREX</div>
<svg style="position:absolute;left:780px;top:334px" width="80" height="96"><g opacity="0.25" fill="rgb(180,180,180)"><path d="M4.2 38.2L40 2L75.8 38.2L70 44.1L40 13L10 44.1Z"/><path d="M17.5 36L25 29V72L17.5 78Z"/><path d="M25 29L36.7 17V21L28.5 30V46H25Z"/><path d="M36.7 12H44.2V90L40.5 94L36.7 90Z"/><path d="M55 29L43.3 17V21L51.5 30V46H55Z"/><path d="M62.5 36L55 29V72L62.5 78Z"/><path d="M17.5 45.7H62.5V53H17.5Z"/></g></svg>
<div style="position:absolute;left:775px;top:429px;line-height:22px;font-size:19px;font-weight:bold;color:rgba(140,140,140,0.28);white-space:pre;letter-spacing:0.2px">YOFOREX</div>
<svg style="position:absolute;left:1092.7px;top:321.6px" width="80" height="96"><g opacity="0.25" fill="rgb(180,180,180)"><path d="M4.2 38.2L40 2L75.8 38.2L70 44.1L40 13L10 44.1Z"/><path d="M17.5 36L25 29V72L17.5 78Z"/><path d="M25 29L36.7 17V21L28.5 30V46H25Z"/><path d="M36.7 12H44.2V90L40.5 94L36.7 90Z"/><path d="M55 29L43.3 17V21L51.5 30V46H55Z"/><path d="M62.5 36L55 29V72L62.5 78Z"/><path d="M17.5 45.7H62.5V53H17.5Z"/></g></svg>
<div style="position:absolute;left:1086px;top:417.5px;line-height:22px;font-size:19px;font-weight:bold;color:rgba(140,140,140,0.28);white-space:pre;letter-spacing:0.2px">YOFOREX</div></body></html>
